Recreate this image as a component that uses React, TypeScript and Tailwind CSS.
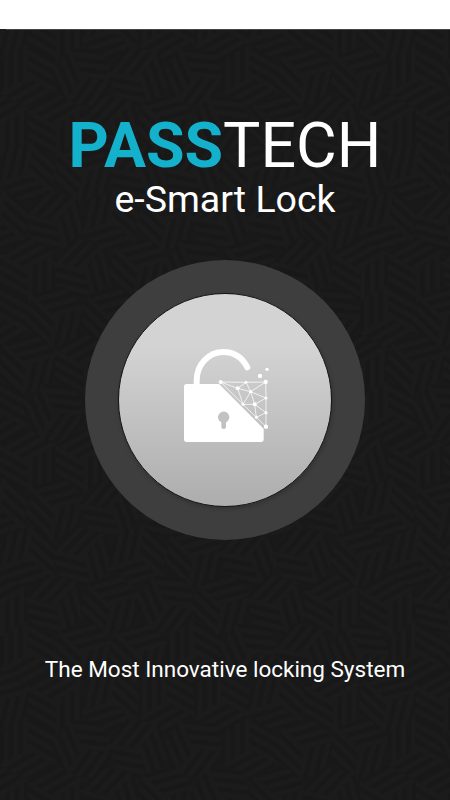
import { useMemo } from 'react';

const HEX = 32;

// Striped tumbling blocks, every hexagon slightly turned
function StripeBackground() {
  const blocks = useMemo(() => {
    const list: { x: number; y: number; turn: number }[] = [];
    const stepX = HEX * Math.sqrt(3);
    const stepY = HEX * 1.5;
    for (let row = -1; row < 18; row++) {
      for (let col = -1; col < 10; col++) {
        list.push({
          x: col * stepX + (row % 2 ? stepX / 2 : 0),
          y: row * stepY,
          turn: [0, 72, 14, -16, 36, 180, 100][(row * row * 3 + col * col * 5 + row * col + 2) % 7],
        });
      }
    }
    return list;
  }, []);

  return (
    <svg className="absolute inset-0 h-full w-full" aria-hidden="true">
      <defs>
        <pattern id="stripes" width="9.6" height="9.6" patternUnits="userSpaceOnUse">
          <rect width="9.6" height="9.6" fill="#181818" />
          <rect width="4.8" height="9.6" fill="#1b1b1b" />
        </pattern>
        <g id="face">
          <path d="M0 0V32L27.7 16V-16Z" fill="url(#stripes)" />
        </g>
      </defs>
      {blocks.map(({ x, y, turn }) => (
        <g key={`${x}-${y}`} transform={`translate(${x} ${y}) rotate(${turn})`}>
          <use href="#face" />
          <use href="#face" transform="rotate(120)" />
          <use href="#face" transform="rotate(240)" />
        </g>
      ))}
    </svg>
  );
}

const nodes = [
  { x: 152, y: 141, r: 6 },
  { x: 228, y: 142, r: 4.5 },
  { x: 287, y: 141, r: 6.5 },
  { x: 203, y: 160, r: 6 },
  { x: 242, y: 170, r: 5 },
  { x: 288, y: 189, r: 4.5 },
  { x: 254, y: 208, r: 6 },
  { x: 219, y: 208, r: 4.5 },
  { x: 259, y: 247, r: 4.5 },
  { x: 288, y: 233, r: 4.5 },
  { x: 288, y: 275, r: 6.5 },
  { x: 270, y: 123, r: 6.5 },
  { x: 291, y: 103, r: 5 },
];

const links = [
  [0, 1], [1, 2], [0, 3], [3, 1], [1, 4], [3, 4], [4, 2], [2, 5], [5, 9], [9, 10],
  [4, 5], [4, 6], [4, 7], [3, 7], [7, 6], [6, 5], [6, 9], [6, 8], [8, 9], [0, 7],
  [7, 8], [8, 10],
];

function LockIcon() {
  return (
    <svg width="110" height="120" viewBox="0 0 330 360" fill="none" className="mb-2.5">
      <path d="M80 152V136A80 85 0 0 1 160 51C192 51 217 68 232 97" stroke="#fff" strokeWidth="18" strokeLinecap="round" />
      <path
        fill="#fff"
        fillRule="evenodd"
        d="M50 147H147L281 281V313Q281 321 273 321H50Q42 321 42 313V155Q42 147 50 147ZM154 262V275A7 7 0 0 0 168 275V262A17 17 0 1 0 154 262Z"
      />
      <g stroke="#fff" strokeOpacity="0.75" strokeWidth="3">
        {links.map(([a, b]) => (
          <line key={`${a}-${b}`} x1={nodes[a].x} y1={nodes[a].y} x2={nodes[b].x} y2={nodes[b].y} />
        ))}
      </g>
      {nodes.map((n) => (
        <circle key={`${n.x}-${n.y}`} cx={n.x} cy={n.y} r={n.r} fill="#fff" />
      ))}
    </svg>
  );
}

export default function App() {
  return (
    <div className="w-full h-screen flex flex-col bg-white font-[Roboto,sans-serif] overflow-hidden">
      {/* Status bar */}
      <div className="h-[29px] shrink-0" />

      <main className="relative flex-1 bg-[#191919] overflow-hidden">
        <StripeBackground />

        <div className="relative flex flex-col items-center text-white">
          <div className="w-full h-px pl-1.5">
            <div className="h-px bg-[#404644]" />
          </div>

          {/* Brand */}
          <h1 className="mt-[79px] text-[62.6px] leading-[74px] whitespace-nowrap">
            <span className="font-bold text-[#14b1cc]">PASS</span>TECH
          </h1>
          <p className="-mt-[7px] text-[37.5px] leading-[46px] whitespace-nowrap">e-Smart Lock</p>

          {/* Unlock button */}
          <div className="mt-[38px] w-[280px] h-[280px] shrink-0 rounded-full bg-[#3e3e3e] flex items-center justify-center">
            <button className="w-[214px] h-[214px] rounded-full border border-[#151515] bg-linear-to-b from-[#d3d3d3] from-25% to-[#adadad] shadow-[1px_2px_4px_rgba(0,0,0,0.2)] flex items-center justify-center">
              <LockIcon />
            </button>
          </div>

          <p className="mt-[115px] text-[22.5px] leading-7 whitespace-nowrap">The Most Innovative locking System</p>
        </div>
      </main>
    </div>
  );
}
